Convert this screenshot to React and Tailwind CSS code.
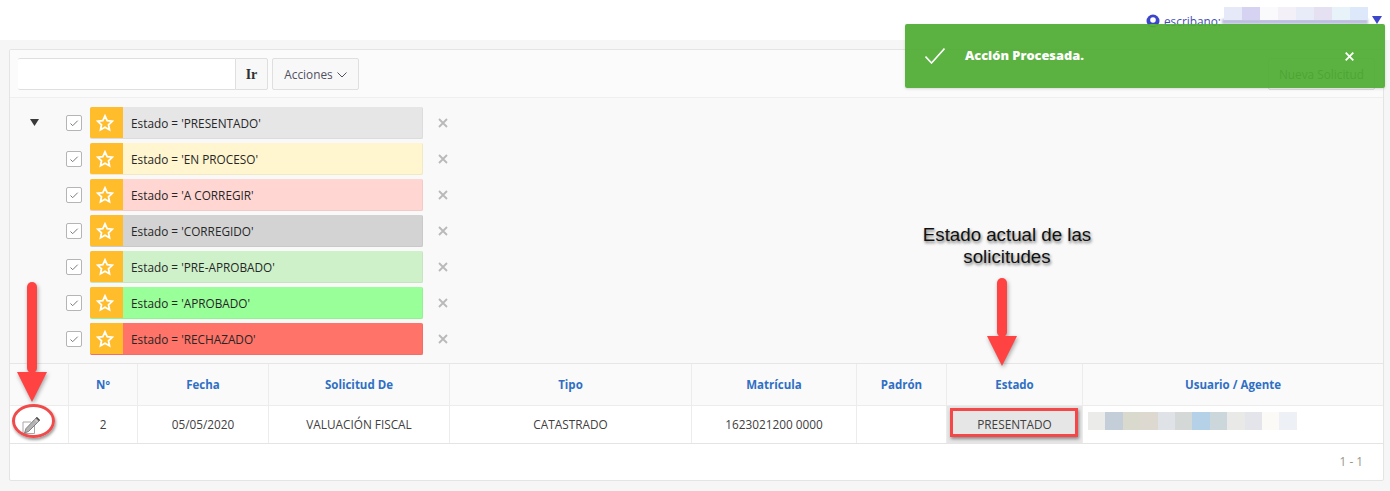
import React from "react";

const filters = [
  ["PRESENTADO", "bg-[#e6e6e6]", "border-[#dcdcdc]"],
  ["EN PROCESO", "bg-[#fff5ce]", "border-[#f2e8c2]"],
  ["A CORREGIR", "bg-[#ffd6d2]", "border-[#f2cac6]"],
  ["CORREGIDO", "bg-[#d3d3d3]", "border-[#c9c9c9]"],
  ["PRE-APROBADO", "bg-[#cef1ca]", "border-[#c4e5c0]"],
  ["APROBADO", "bg-[#99ff99]", "border-[#91f291]"],
  ["RECHAZADO", "bg-[#ff7368]", "border-[#f26d63]"],
];

const blurTop = ["bg-[#e6eaf8]", "bg-[#d6d3f2]", "bg-[#fafafd]", "bg-[#f3f0f7]", "bg-[#e8ebf8]", "bg-[#e5e0f2]", "bg-[#e8f2f9]", "bg-[#dde9fb]"];
const blurRow = ["bg-[#ebebe9]", "bg-[#c4ced9]", "bg-[#dad9cd]", "bg-[#ddd9d0]", "bg-[#dfe2e7]", "bg-[#d4d9d8]", "bg-[#b5d1e7]", "bg-[#ccd7dc]", "bg-[#e9eae7]", "bg-[#e3e5ea]", "bg-[#fbfaf6]", "bg-[#edf1f5]"];

const Star = () => (
  <svg width="18" height="18" viewBox="0 0 24 24" fill="none" stroke="white" strokeWidth="2.4" strokeLinejoin="miter" className="mr-[3px]">
    <path d="M12 2.5l2.9 6.3 6.8.8-5 4.7 1.3 6.8-6-3.4-6 3.4 1.3-6.8-5-4.7 6.8-.8z" />
  </svg>
);

const Check = () => (
  <span className="flex h-4 w-4 items-center justify-center rounded-[2px] border border-[#b5b5b5] bg-white">
    <svg width="10" height="10" viewBox="0 0 10 10" fill="none" stroke="#77777f" strokeWidth="1">
      <path d="M1.5 5.5l2.2 2.2 5-5" />
    </svg>
  </span>
);

function Arrow({ className, h, headAt }) {
  return (
    <svg className={"absolute drop-shadow-[1px_2px_2px_rgba(0,0,0,0.35)] " + className} width="30" height={h} viewBox={`0 0 30 ${h}`}>
      <rect x="10" y="0" width="10" height={headAt + 1} rx="5" fill="#ff4343" />
      <path d={`M0 ${headAt}H30L15 ${h}Z`} fill="#ff4343" />
    </svg>
  );
}

const cols = [
  ["w-[59px]", ""],
  ["w-[69px]", "Nº"],
  ["w-[131px]", "Fecha"],
  ["w-[181px]", "Solicitud De"],
  ["w-[242px]", "Tipo"],
  ["w-[165px]", "Matrícula"],
  ["w-[90px]", "Padrón"],
  ["w-[136px]", "Estado"],
  ["flex-1", "Usuario / Agente"],
];

const cells = ["", "2", "05/05/2020", "VALUACIÓN FISCAL", "CATASTRADO", "1623021200 0000", "", "PRESENTADO", ""];

export default function App() {
  return (
    <div className="relative h-[491px] w-[1390px] overflow-hidden bg-[#f6f6f6] font-['Open_Sans','Noto_Sans',sans-serif] text-[11.8px] text-[#404040]">
      {/* Top bar */}
      <header className="flex h-10 items-start justify-end bg-white pr-2">
        <div className="flex items-center pt-[14px] text-[11.8px] leading-[14px] text-[#3f4fb5]">
          <svg width="14" height="14" viewBox="0 0 14 14" className="mr-[4px]">
            <circle cx="7" cy="7" r="6.5" fill="#3c46c8" />
            <circle cx="7" cy="6" r="2.8" fill="white" />
            <path d="M2.8 12c.8-2.6 7.6-2.6 8.4 0" fill="white" />
          </svg>
          <span className="w-[208px] whitespace-nowrap">escribano:</span>
          <svg width="10" height="8" viewBox="0 0 10 8" className="-mt-[2px]"><path d="M0 0h10L5 8z" fill="#3c46c8" /></svg>
        </div>
      </header>
      <div className="absolute left-[1222px] top-[19px] h-[5px] w-[146px] bg-[#8f96c8]/60 blur-[1px]" />
      <div className="absolute left-[1224px] top-[7px] flex h-[13px]">
        {blurTop.map((c, i) => <div key={i} className={"w-[18px] " + c} />)}
      </div>

      {/* Panel */}
      <main className="mx-[9px] mt-[9px] h-[432px] w-[1375px] rounded-[2px] border border-[#e4e4e4] bg-white">
        {/* Toolbar */}
        <div className="flex h-[48px] items-start justify-between border-b border-[#efefef] bg-[#fbfbfb] pt-2 pl-2 pr-[8px]">
          <div className="flex">
            <div className="h-8 w-[217px] rounded-l-[2px] border-y border-[#dfdfdf] bg-white" />
            <button className="h-8 w-[33px] rounded-r-[2px] border border-[#dfdfdf] bg-[#f8f8f8] pt-[1px] font-['Liberation_Serif',serif] text-[14px] font-bold text-[#303030]">Ir</button>
            <button className="ml-1 flex h-8 w-[87px] items-center justify-center gap-1 rounded-[2px] border border-[#dfdfdf] bg-[#f8f8f8] pt-[1px] text-[11.8px] text-[#505060]">
              Acciones
              <svg width="10" height="6" viewBox="0 0 10 6" fill="none" stroke="#505060" strokeWidth="1"><path d="M.5.5L5 5 9.5.5" /></svg>
            </button>
          </div>
          <button className="h-8 w-[107px] rounded-[2px] border border-[#dfdfdf] bg-[#f8f8f8] pt-[1px] text-[11.8px] text-[#404040]">Nueva Solicitud</button>
        </div>

        {/* Filters */}
        <div className="flex h-[266px] gap-0 border-b border-[#e6e6e6] bg-[#f9f9f9] pt-[9px]">
          <div className="w-[56px] pl-5 pt-[12px]">
            <svg width="9" height="7" viewBox="0 0 9 7"><path d="M0 0h9L4.5 7z" fill="#3a3a3a" /></svg>
          </div>
          <div className="flex flex-col gap-1">
            {filters.map(([name, bg, bd]) => (
              <div key={name} className="flex h-8 items-center">
                <Check />
                <div className={"ml-2 flex h-8 w-[333px] overflow-hidden rounded-[2px] border-r border-b " + bd + " " + bg}>
                  <span className="flex w-[33px] shrink-0 items-center justify-center bg-[#ffbc2b]"><Star /></span>
                  <span className="flex items-center whitespace-nowrap pl-2 pt-[2px] text-[11.8px] text-[#262626]">{`Estado = '${name}'`}</span>
                </div>
                <svg className="ml-[15px]" width="10" height="10" viewBox="0 0 10 10" stroke="#b9b9b9" strokeWidth="1.8"><path d="M1 1l8 8M9 1L1 9" /></svg>
              </div>
            ))}
          </div>
        </div>

        {/* Table */}
        <div className="flex h-[42px] border-b border-[#ececec] bg-[#fafafa]">
          {cols.map(([w, label], i) => (
            <div key={i} className={w + " flex items-center justify-center text-[11.5px] font-bold text-[#2f6fc4] " + (i < 8 ? "border-r border-[#ececec]" : "")}>{label}</div>
          ))}
        </div>
        <div className="flex h-[38px] border-b border-[#e4e4e4] bg-white">
          {cols.map(([w], i) => (
            <div key={i} className={w + " flex items-center justify-center text-[11.8px] text-[#404040] " + (i < 8 ? "border-r border-[#ececec] " : "") + (i === 7 ? "bg-[#e6e6e6]" : "") + (i === 0 ? " pr-[17px]" : "")}>
              {i === 0 ? (
                <svg width="20" height="20" viewBox="0 0 20 20" fill="none">
                  <path d="M13.5 10V18.5H2V7H10" stroke="#a8a8a8" strokeWidth="1" />
                  <path d="M3.5 18l1.5-4.5L15.5 2.5l3 3L7.5 16.5z" fill="#b4b4b4" stroke="#6a6a6a" strokeWidth=".8" />
                  <path d="M14 4.5l2.8 2.8" stroke="#e8e8e8" strokeWidth=".8" />
                  <path d="M15.5 2.5l3 3" stroke="#444" strokeWidth="1.6" />
                </svg>
              ) : cells[i]}
            </div>
          ))}
        </div>
        <div className="flex h-[36px] items-center justify-end pr-[20px] text-[11.8px] text-[#9b9484]">1 - 1</div>
      </main>

      {/* Blurred agent name */}
      <div className="absolute left-[1088px] top-[412px] flex h-[18px]">
        {blurRow.map((c, i) => <div key={i} className={"w-[17.4px] " + c} />)}
      </div>

      {/* Annotations */}
      <Arrow className="left-[17px] top-[282px]" h={120} headAt={90} />
      <div className="absolute left-[12px] top-[404px] h-[34px] w-[43px] rounded-[50%] border-[3px] border-[#f04a4a] shadow-[1px_2px_3px_rgba(0,0,0,0.4)]" />
      <div className="absolute left-[907px] top-[224px] w-[200px] text-center font-['Liberation_Sans',sans-serif] text-[18.7px] leading-[22px] text-[#111] [text-shadow:1px_2px_3px_rgba(0,0,0,0.55)]">
        Estado actual de las solicitudes
      </div>
      <Arrow className="left-[987px] top-[278px]" h={88} headAt={58} />
      <div className="absolute left-[950px] top-[408px] h-[29px] w-[128px] border-[3px] border-[#f44848] shadow-[1px_2px_3px_rgba(0,0,0,0.4)]" />

      {/* Toast */}
      <div className="absolute left-[905px] top-[24px] flex h-16 w-[480px] items-center rounded-[2px] bg-[#4fac33]/[0.93] pl-[20px] pr-[31px] text-white shadow-[0_1px_3px_rgba(0,0,0,0.15)]">
        <svg width="20" height="16" viewBox="0 0 20 16" fill="none" stroke="white" strokeWidth="1.6"><path d="M.5 8.5l6 6.5L19.5.5" /></svg>
        <span className="ml-[20px] flex-1 text-[12.8px] font-extrabold">Acción Procesada.</span>
        <svg width="9" height="9" viewBox="0 0 9 9" stroke="white" strokeWidth="1.8"><path d="M.7.7l7.6 7.6M8.3.7L.7 8.3" /></svg>
      </div>
    </div>
  );
}
